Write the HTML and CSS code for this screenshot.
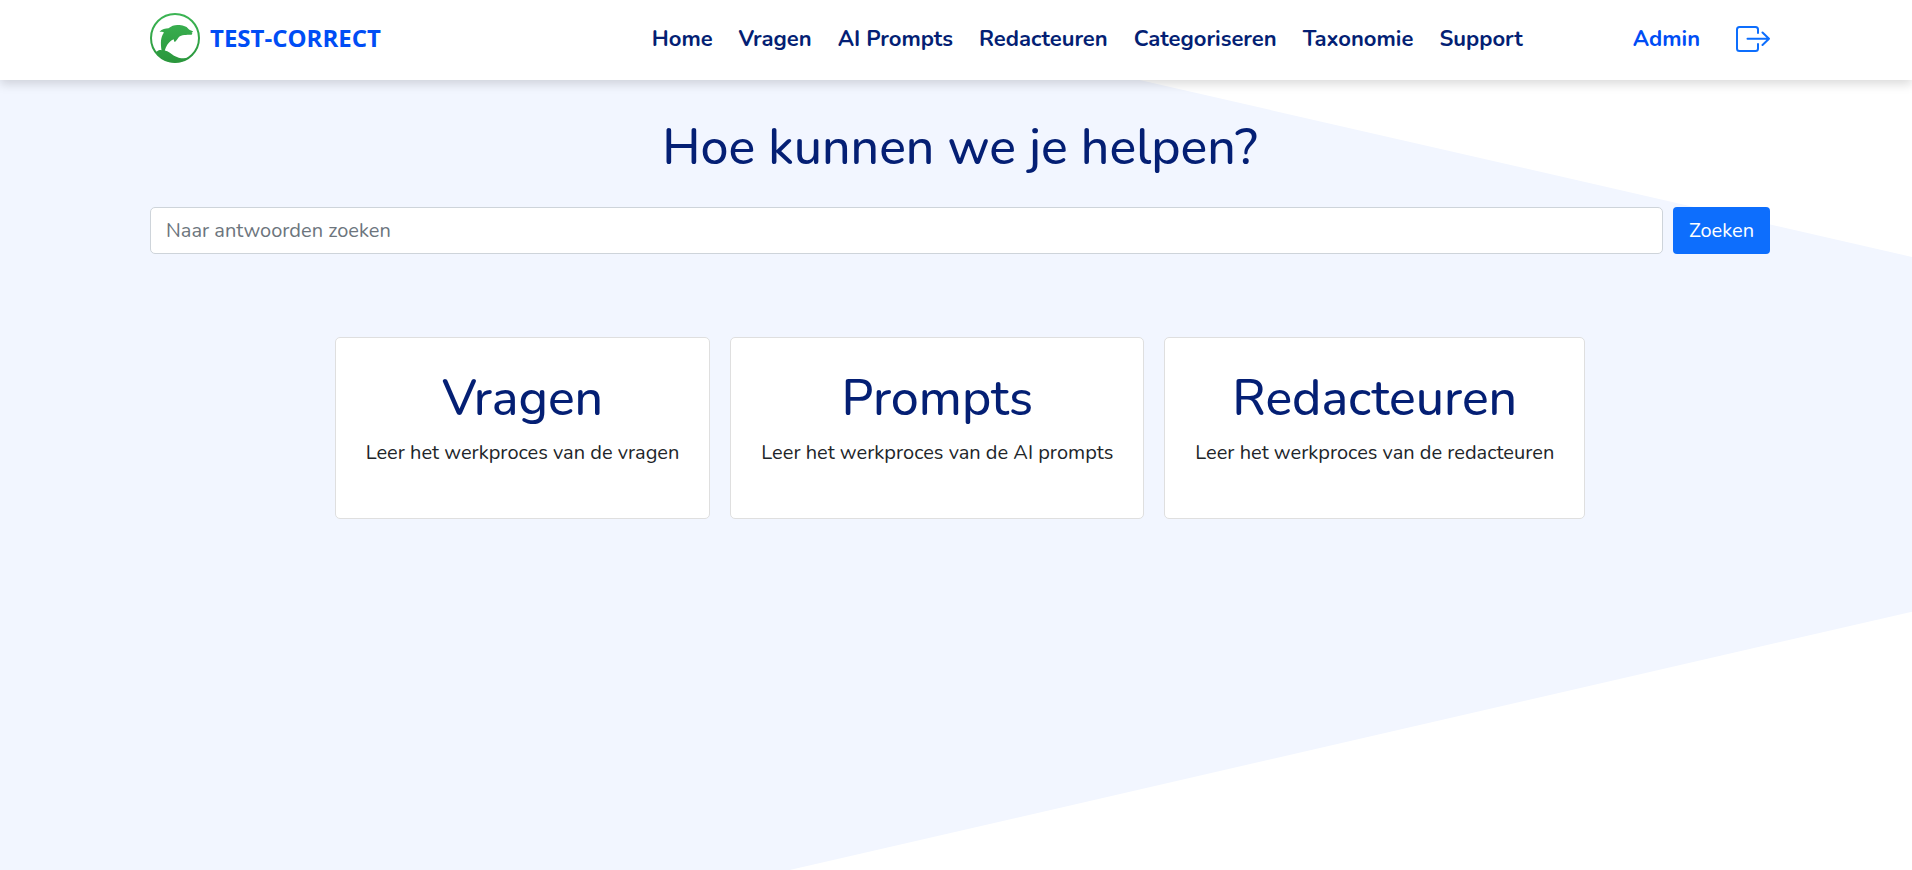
FILE: index.html
```html
<!DOCTYPE html>
<html lang="nl">
<head>
<meta charset="utf-8">
<meta name="viewport" content="width=device-width, initial-scale=1">
<title>Test-Correct</title>
<link rel="stylesheet" href="styles.css">
</head>
<body>
<header class="header">
  <a class="logo" href="#">
    <svg class="logo-mark" viewBox="0 0 50 50" aria-hidden="true">
      <defs>
        <linearGradient id="green" x1="0" y1="0" x2="0" y2="50" gradientUnits="userSpaceOnUse">
          <stop offset="0" stop-color="#3cb554"/>
          <stop offset="1" stop-color="#2a963c"/>
        </linearGradient>
      </defs>
      <circle cx="25" cy="25" r="24" fill="#fff" stroke="url(#green)" stroke-width="2"/>
      <path fill="url(#green)" d="M6 39C9 37 10 37 11.500 37.200C10.500 30 10.500 24 14 19.500C13 18.500 11 18.500 9.500 18.800C12 16 15.500 15.500 18.500 15.300C21 13 25 11.800 28 12C32 12 36.500 13 38.500 16C40 17.500 42.500 17.500 43 18.500C42.800 19.300 42 19.500 41.500 19.800C42.500 20.200 42.500 21 41.500 21.800C38.500 22 33.500 21.500 29.500 23.500C28 24.500 27.500 26.500 25.500 28.500C24.500 29 23.500 28.500 24 27.500C24.500 26.500 23.500 26 22 27C17.500 30 16 34 14.800 37.500C18.500 38.200 20.500 40.500 24 42.800C29 45.500 34 46 39 44.500C35 48 30.500 49.500 25 49.500C16.500 49.500 10 45.500 6 39Z"/>
    </svg>
    <span class="logo-text">TEST-CORRECT</span>
  </a>
  <nav class="nav">
    <a href="#">Home</a>
    <a href="#">Vragen</a>
    <a href="#">AI Prompts</a>
    <a href="#">Redacteuren</a>
    <a href="#">Categoriseren</a>
    <a href="#">Taxonomie</a>
    <a href="#">Support</a>
  </nav>
  <div class="account">
    <a class="admin" href="#">Admin</a>
    <button class="logout" type="button" aria-label="Uitloggen">
      <svg viewBox="0 0 34 26" width="34" height="26" fill="none" stroke="#0d6efd" stroke-width="2" stroke-linecap="round" stroke-linejoin="round" aria-hidden="true">
        <path d="M22 7V3.500Q22 1 19.500 1H3.500Q1 1 1 3.500V22.500Q1 25 3.500 25H19.500Q22 25 22 22.500V18"/>
        <path d="M11.500 12.800H33M26.500 6.500L33 12.800L26.500 19"/>
      </svg>
    </button>
  </div>
</header>
<main class="main">
  <h1 class="title">Hoe kunnen we je helpen?</h1>
  <form class="search">
    <input class="search-input" type="search" placeholder="Naar antwoorden zoeken" aria-label="Naar antwoorden zoeken">
    <button class="search-button" type="submit">Zoeken</button>
  </form>
  <div class="cards">
    <section class="card">
      <h2 class="title">Vragen</h2>
      <p>Leer het werkproces van de vragen</p>
    </section>
    <section class="card">
      <h2 class="title">Prompts</h2>
      <p>Leer het werkproces van de AI prompts</p>
    </section>
    <section class="card">
      <h2 class="title">Redacteuren</h2>
      <p>Leer het werkproces van de redacteuren</p>
    </section>
  </div>
</main>
</body>
</html>
```
FILE: styles.css
```css
* {
  box-sizing: border-box;
}

body {
  margin: 0;
  min-height: 100vh;
  display: flex;
  flex-direction: column;
  background: #fff;
  color: #212529;
  font-family: Nunito, "Open Sans", sans-serif;
  font-size: 20px;
  line-height: 30px;
}

a {
  color: inherit;
  text-decoration: none;
}

.header {
  z-index: 1;
  display: flex;
  align-items: center;
  height: 80px;
  padding: 0 142px 4px 150px;
  background: #fff;
  box-shadow: 0 4px 10px rgba(0, 0, 0, 0.15);
  color: #041f74;
  font-size: 22px;
  font-weight: 700;
}

.logo {
  display: flex;
  align-items: center;
  gap: 10px;
  color: #004df5;
  font-family: "Open Sans", sans-serif;
  font-size: 24px;
}

.logo-mark {
  width: 50px;
  height: 50px;
}

.nav {
  display: flex;
  gap: 26px;
  margin-left: auto;
  padding-top: 2px;
}

.account {
  display: flex;
  align-items: center;
  gap: 36px;
  margin-left: 110px;
  padding-top: 2px;
  color: #004df5;
}

.logout {
  display: flex;
  padding: 0;
  border: 0;
  background: none;
}

.main {
  position: relative;
  flex: 1;
  padding: 37px 142px 40px 150px;
}

.main::before {
  content: "";
  position: absolute;
  inset: 0;
  z-index: -1;
  background: #f2f6ff;
  clip-path: polygon(0 0, 59.6% 0, 100% 22.4%, 100% 67.3%, 41.3% 100%, 0 100%);
}

.title {
  margin: 0;
  color: #041f74;
  font-size: 50px;
  font-weight: 500;
  line-height: 62px;
  text-align: center;
}

.search {
  display: flex;
  gap: 10px;
  margin: 28px 0 83px;
}

.search-input {
  flex: 1;
  min-width: 0;
  height: 47px;
  padding: 0 15px;
  border: 1px solid #ced4da;
  border-radius: 5px;
  background: #fff;
  font: inherit;
}

.search-input::placeholder {
  color: #6c757d;
  opacity: 1;
}

.search-button {
  padding: 0 16px;
  border: 0;
  border-radius: 4px;
  background: #0d6efd;
  color: #fff;
  font: inherit;
}

.cards {
  display: flex;
  flex-wrap: wrap;
  justify-content: center;
  gap: 20px;
}

.card {
  padding: 30px 30px 50px;
  border: 1px solid #dfdfdf;
  border-radius: 5px;
  background: #fff;
  text-align: center;
}

.card p {
  margin: 8px 0 0;
}
```
